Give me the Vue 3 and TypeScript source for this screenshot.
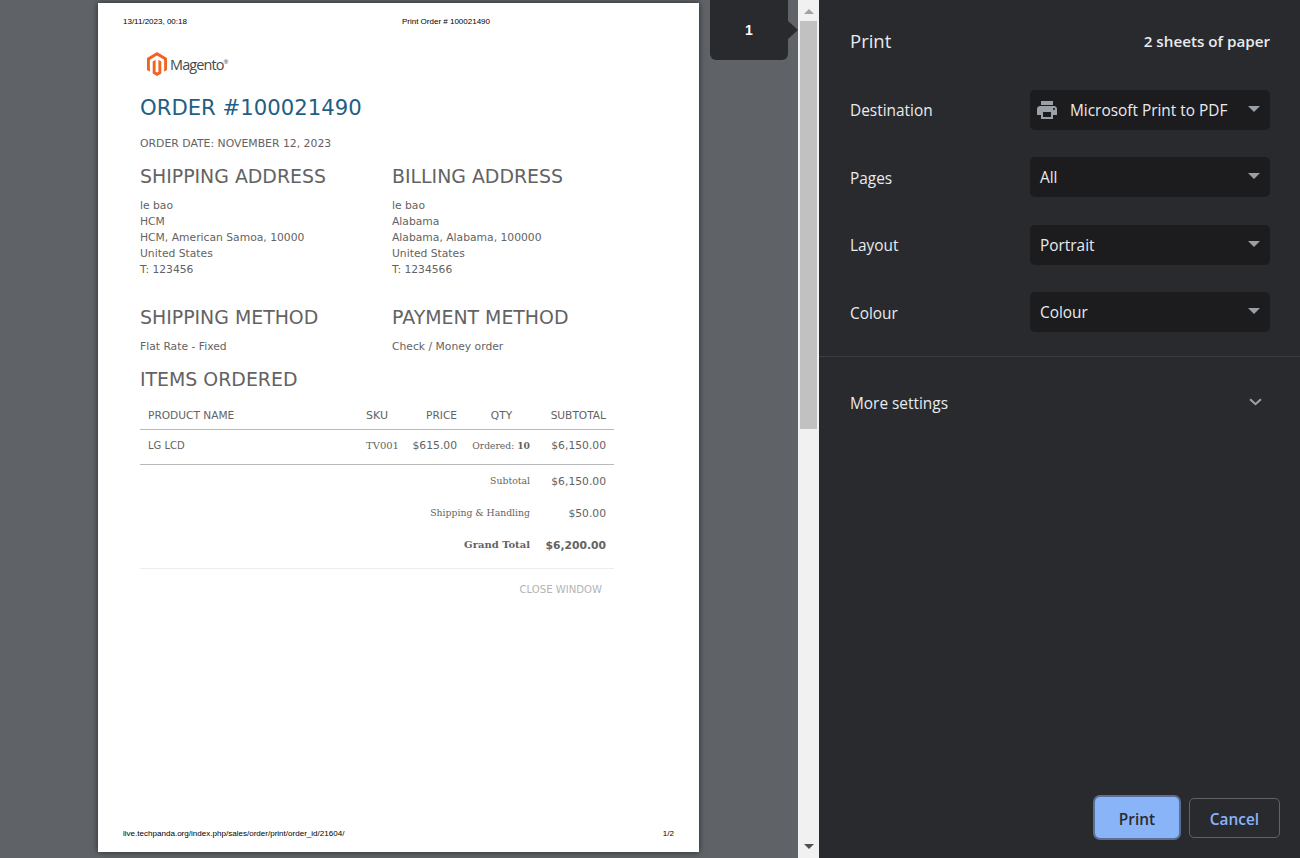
<template>
  <div class="print-preview">
    <!-- 预览区域 -->
    <div class="preview-area">
      <div class="paper">
        <div class="page-header">
          <span>13/11/2023, 00:18</span>
          <span class="page-title">Print Order # 100021490</span>
        </div>

        <div class="order">
          <div class="logo">
            <svg class="logo-mark" viewBox="1.6 0 20.8 24" width="20" height="24" preserveAspectRatio="none">
              <path fill="#f26322" d="M12 24l-4.455-2.572v-12l2.97-1.715v12.001l1.485.902 1.485-.902V7.713l2.971 1.715v12L12 24zM22.391 6v12l-2.969 1.714V7.713L12 3.43 4.574 7.713v12.001L1.609 18V6L12 0l10.391 6z" />
            </svg>
            <span class="logo-text">Magento<sup>®</sup></span>
          </div>

          <h1 class="order-title">ORDER #100021490</h1>
          <div class="order-date">ORDER DATE: NOVEMBER 12, 2023</div>

          <div class="info-grid">
            <div v-for="block in addressBlocks" :key="block.title" class="info-block">
              <h2 class="section-title">{{ block.title }}</h2>
              <div v-for="line in block.lines" :key="line" class="info-line">{{ line }}</div>
            </div>
          </div>

          <div class="info-grid method-grid">
            <div v-for="block in methodBlocks" :key="block.title" class="info-block">
              <h2 class="section-title">{{ block.title }}</h2>
              <div v-for="line in block.lines" :key="line" class="info-line">{{ line }}</div>
            </div>
          </div>

          <h2 class="section-title items-title">ITEMS ORDERED</h2>

          <table class="items">
            <thead>
              <tr>
                <th class="col-name">PRODUCT NAME</th>
                <th class="col-sku">SKU</th>
                <th class="col-price">PRICE</th>
                <th class="col-qty">QTY</th>
                <th class="col-sub">SUBTOTAL</th>
              </tr>
            </thead>
            <tbody>
              <tr>
                <td class="col-name">LG LCD</td>
                <td class="col-sku serif">TV001</td>
                <td class="col-price">$615.00</td>
                <td class="col-qty serif">Ordered: <b>10</b></td>
                <td class="col-sub">$6,150.00</td>
              </tr>
            </tbody>
          </table>

          <div class="totals">
            <div v-for="row in totals" :key="row.label" class="total-row" :class="{ grand: row.grand }">
              <span class="total-label">{{ row.label }}</span>
              <span class="total-value">{{ row.value }}</span>
            </div>
          </div>

          <div class="close-window">CLOSE WINDOW</div>
        </div>

        <div class="page-footer">
          <span>live.techpanda.org/index.php/sales/order/print/order_id/21604/</span>
          <span>1/2</span>
        </div>
      </div>

      <div class="page-bubble">1</div>
    </div>

    <!-- 滚动条 -->
    <div class="scrollbar">
      <div class="arrow-up"></div>
      <div class="thumb"></div>
      <div class="arrow-down"></div>
    </div>

    <!-- 设置面板 -->
    <div class="panel">
      <div class="panel-header">
        <span class="panel-title">Print</span>
        <span class="sheets">2 sheets of paper</span>
      </div>

      <div class="settings">
        <div v-for="item in settings" :key="item.label" class="setting-row">
          <span class="setting-label">{{ item.label }}</span>
          <div class="select">
            <svg v-if="item.icon" class="printer" viewBox="0 0 24 24" width="24" height="24">
              <path fill="#9aa0a6" d="M19 8H5c-1.66 0-3 1.34-3 3v6h4v4h12v-4h4v-6c0-1.66-1.34-3-3-3zm-3 11H8v-5h8v5zm3-7c-.55 0-1-.45-1-1s.45-1 1-1 1 .45 1 1-.45 1-1 1zm-1-9H6v4h12V3z" />
            </svg>
            <span class="select-value">{{ item.value }}</span>
            <span class="select-caret"></span>
          </div>
        </div>
      </div>

      <div class="more-settings">
        <span>More settings</span>
        <svg viewBox="0 0 12 8" width="13" height="8" preserveAspectRatio="none">
          <path d="M1 1.2l5 5 5-5" fill="none" stroke="#9aa0a6" stroke-width="2" />
        </svg>
      </div>

      <div class="panel-actions">
        <button class="btn btn-print">Print</button>
        <button class="btn btn-cancel">Cancel</button>
      </div>
    </div>
  </div>
</template>

<script setup lang="ts">
interface InfoBlock {
  title: string;
  lines: string[];
}

interface TotalRow {
  label: string;
  value: string;
  grand?: boolean;
}

interface SettingItem {
  label: string;
  value: string;
  icon?: boolean;
}

const addressBlocks: InfoBlock[] = [
  {
    title: 'SHIPPING ADDRESS',
    lines: ['le bao', 'HCM', 'HCM, American Samoa, 10000', 'United States', 'T: 123456'],
  },
  {
    title: 'BILLING ADDRESS',
    lines: ['le bao', 'Alabama', 'Alabama, Alabama, 100000', 'United States', 'T: 1234566'],
  },
];

const methodBlocks: InfoBlock[] = [
  { title: 'SHIPPING METHOD', lines: ['Flat Rate - Fixed'] },
  { title: 'PAYMENT METHOD', lines: ['Check / Money order'] },
];

const totals: TotalRow[] = [
  { label: 'Subtotal', value: '$6,150.00' },
  { label: 'Shipping & Handling', value: '$50.00' },
  { label: 'Grand Total', value: '$6,200.00', grand: true },
];

const settings: SettingItem[] = [
  { label: 'Destination', value: 'Microsoft Print to PDF', icon: true },
  { label: 'Pages', value: 'All' },
  { label: 'Layout', value: 'Portrait' },
  { label: 'Colour', value: 'Colour' },
];
</script>

<style>
html,
body {
  margin: 0;
  overflow: hidden;
}
</style>

<style scoped>
.print-preview {
  display: flex;
  width: 1300px;
  height: 858px;
  overflow: hidden;
  background: #5f6368;
}

.preview-area {
  position: relative;
  flex: 0 0 798px;
  padding: 3px 0 0 98px;
  box-sizing: border-box;
  background: #5f6368;
}

.paper {
  display: flex;
  flex-direction: column;
  width: 601px;
  height: 849px;
  background: #ffffff;
  box-shadow: 0 0 6px rgba(0, 0, 0, 0.6);
  font-family: "DejaVu Sans", Verdana, sans-serif;
  color: #636363;
}

.page-header {
  display: flex;
  padding: 14px 0 0 25px;
  height: 10px;
  font-family: "Liberation Sans", Arial, sans-serif;
  font-size: 8px;
  line-height: 10px;
  color: #000000;
}

.page-title {
  margin-left: 215px;
}

.order {
  flex: 1;
  padding: 0 85px 0 42px;
}

.logo {
  display: flex;
  align-items: center;
  height: 24px;
  margin: 25px 0 0 7px;
}

.logo-mark {
  flex: none;
}

.logo-text {
  margin-left: 3px;
  font-family: "Open Sans", sans-serif;
  font-size: 14.5px;
  letter-spacing: -0.9px;
  color: #4a4a4a;
}

.logo-text sup {
  font-size: 6px;
  vertical-align: 6px;
  line-height: 0;
  letter-spacing: 0;
}

.order-title {
  margin: 18px 0 0;
  font-size: 21.2px;
  line-height: 28px;
  font-weight: 400;
  color: #1f5f85;
}

.order-date {
  margin-top: 14px;
  font-size: 10.85px;
  line-height: 16px;
}

.info-grid {
  display: grid;
  grid-template-columns: 252px 1fr;
  margin-top: 12px;
}

.method-grid {
  margin-top: 27px;
}

.section-title {
  margin: 0 0 10px;
  font-size: 18.9px;
  line-height: 24px;
  font-weight: 400;
  color: #636363;
}

.info-line {
  font-size: 10.75px;
  line-height: 16px;
}

.items-title {
  margin: 12px 0 0;
}

.items {
  width: 474px;
  margin-top: 9px;
  border-collapse: collapse;
  table-layout: fixed;
  font-size: 10.75px;
}

.items th,
.items td {
  box-sizing: border-box;
  padding: 0 8px;
  white-space: nowrap;
  border-bottom: 1px solid #b9b9b9;
}

.items th {
  height: 29px;
  padding-top: 2px;
  font-size: 10.6px;
  font-weight: 400;
}

.items td {
  height: 35px;
  padding-bottom: 2px;
}

.items .col-name {
  width: 218px;
  text-align: left;
}

.items td.col-name {
  font-size: 10px;
}

.items .col-sku {
  width: 47px;
  padding-right: 0;
  text-align: left;
}

.items th.col-sku {
  font-size: 11px;
}

.items .col-price {
  width: 60px;
  padding-left: 0;
  text-align: right;
}

.items .col-qty {
  width: 73px;
  padding-left: 0;
  text-align: right;
}

.items th.col-qty {
  padding-left: 8px;
  text-align: center;
}

.items td.col-qty {
  font-size: 9.2px;
}

.items .col-sub {
  width: 76px;
  padding-left: 0;
  text-align: right;
}

.serif {
  font-family: "DejaVu Serif", Georgia, serif;
  font-size: 10px;
}

.totals {
  padding: 0 8px 7px 0;
  border-bottom: 1px solid #ececec;
}

.total-row {
  display: flex;
  justify-content: flex-end;
  align-items: center;
  height: 32px;
  font-size: 10.75px;
}

.total-label {
  font-family: "DejaVu Serif", Georgia, serif;
  font-size: 9.3px;
}

.total-value {
  width: 76px;
  margin-top: 2px;
  text-align: right;
}

.grand {
  font-weight: 700;
}

.grand .total-label {
  font-size: 10px;
}

.close-window {
  margin-top: 14px;
  padding-right: 12px;
  font-size: 10.1px;
  line-height: 14px;
  text-align: right;
  color: #b4b4b4;
}

.page-footer {
  display: flex;
  justify-content: space-between;
  padding: 0 25px 13px;
  font-family: "Liberation Sans", Arial, sans-serif;
  font-size: 8.05px;
  line-height: 10px;
  color: #000000;
}

.page-bubble {
  position: absolute;
  top: 0;
  left: 710px;
  width: 78px;
  height: 60px;
  border-radius: 0 0 6px 6px;
  background: #292a2e;
  color: #ffffff;
  font-family: "Liberation Sans", Arial, sans-serif;
  font-size: 14px;
  font-weight: 700;
  line-height: 60px;
  text-align: center;
}

.page-bubble::after {
  content: "";
  position: absolute;
  top: 21px;
  left: 78px;
  border-left: 10px solid #292a2e;
  border-top: 9px solid transparent;
  border-bottom: 9px solid transparent;
}

.scrollbar {
  display: flex;
  flex-direction: column;
  align-items: center;
  flex: 0 0 21px;
  padding: 0 2px;
  box-sizing: border-box;
  background: #f1f1f1;
}

.arrow-up {
  margin: 9px 0 7px;
  border-left: 5px solid transparent;
  border-right: 5px solid transparent;
  border-bottom: 5px solid #a3a3a3;
}

.thumb {
  width: 17px;
  height: 408px;
  background: #c1c1c1;
}

.arrow-down {
  margin-top: auto;
  margin-bottom: 9px;
  border-left: 5px solid transparent;
  border-right: 5px solid transparent;
  border-top: 5px solid #505050;
}

.panel {
  display: flex;
  flex-direction: column;
  flex: 1;
  background: #292a2e;
  font-family: "Open Sans", "Noto Sans", sans-serif;
  color: #e8eaed;
}

.panel-header {
  display: flex;
  justify-content: space-between;
  align-items: center;
  height: 82px;
  padding: 0 30px 0 31px;
}

.panel-title {
  margin-bottom: 2px;
  font-size: 18.5px;
}

.sheets {
  font-size: 15.2px;
  font-weight: 600;
}

.settings {
  display: flex;
  flex-direction: column;
  gap: 27px;
  padding: 8px 30px 24px 31px;
  border-bottom: 1px solid #3c3d41;
}

.setting-row {
  display: flex;
  align-items: center;
  justify-content: space-between;
}

.setting-row:nth-child(2) {
  margin-bottom: 1px;
}

.setting-row:nth-child(even) .setting-label {
  padding-top: 2px;
}

.setting-label {
  font-size: 15.4px;
}

.select {
  display: flex;
  align-items: center;
  width: 240px;
  height: 40px;
  padding: 0 10px;
  box-sizing: border-box;
  border-radius: 5px;
  background: #1c1c1e;
  font-size: 15.4px;
}

.printer {
  margin: 0 11px 0 -5px;
}

.select-caret {
  margin-left: auto;
  margin-bottom: 2px;
  border-left: 6.5px solid transparent;
  border-right: 6.5px solid transparent;
  border-top: 6px solid #9aa0a6;
}

.more-settings {
  display: flex;
  align-items: center;
  justify-content: space-between;
  height: 93px;
  padding: 0 38px 0 31px;
  font-size: 15.4px;
}

.more-settings svg {
  margin-bottom: 3px;
}

.panel-actions {
  display: flex;
  align-items: flex-end;
  justify-content: flex-end;
  gap: 10px;
  margin-top: auto;
  padding: 0 20px 20px 0;
}

.btn {
  height: 40px;
  padding: 2px 0 0;
  border-radius: 5px;
  font-family: "Open Sans", "Noto Sans", sans-serif;
  font-size: 15.4px;
  font-weight: 600;
}

.btn-print {
  width: 84px;
  height: 41px;
  padding-top: 4px;
  border: none;
  background: #8ab4f8;
  color: #2a2b2f;
  box-shadow: 0 0 0 2px #5a6f95;
}

.btn-cancel {
  width: 91px;
  border: 1px solid #5f6368;
  background: transparent;
  color: #8ab4f8;
}
</style>
